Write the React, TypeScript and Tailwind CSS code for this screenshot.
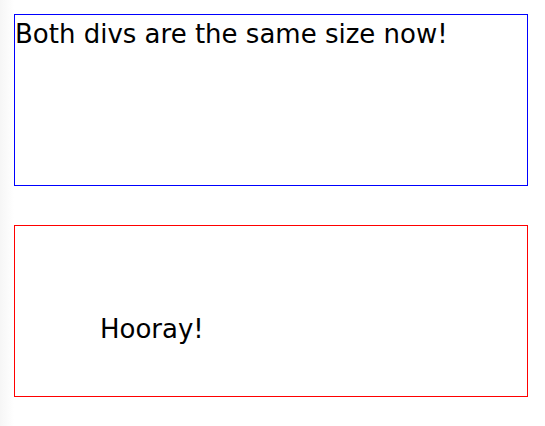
export default function App() {
    return (
        <div
            className="min-h-screen w-full bg-[linear-gradient(to_right,#f6f6f6,#ffffff_14px)] pl-[14px] pt-[14px] text-black"
            style={{ fontFamily: '"DejaVu Sans", Verdana, sans-serif' }}
        >
            <div className="flex flex-col gap-[39px]">
                <div className="h-[172px] w-[514px] border border-[#0000ff] bg-white text-[26px] leading-[39px]">
                    Both divs are the same size now!
                </div>
                <div className="h-[172px] w-[514px] border border-[#ff0000] bg-white pl-[85px] pt-[84px] text-[26px] leading-[39px]">
                    Hooray!
                </div>
            </div>
        </div>
    )
}
